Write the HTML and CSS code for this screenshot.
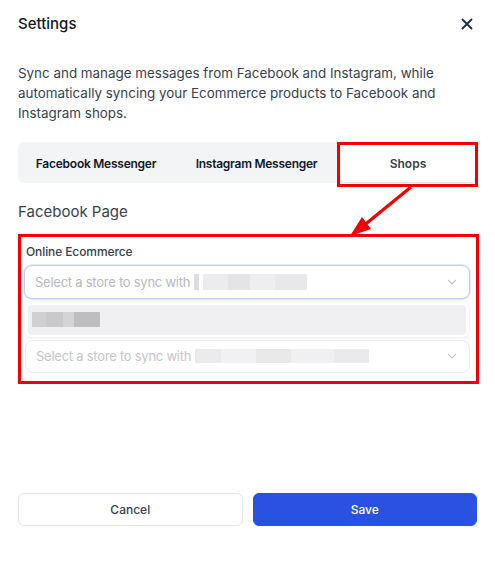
FILE: index.html
```html
<!DOCTYPE html>
<html lang="en">
<head>
<meta charset="utf-8">
<title>Settings</title>
<link rel="stylesheet" href="styles.css">
</head>
<body>
<div class="modal">
  <header class="header">
    <h1 class="title">Settings</h1>
    <button class="close" aria-label="Close">
      <svg width="12" height="12" viewBox="0 0 12 12"><path d="M1.5 1.5L10.5 10.5M10.5 1.5L1.5 10.5" stroke="#1f2937" stroke-width="1.8" stroke-linecap="round"/></svg>
    </button>
  </header>
  <p class="desc">Sync and manage messages from Facebook and Instagram, while automatically syncing your Ecommerce products to Facebook and Instagram shops.</p>

  <div class="tabs">
    <div class="tab">Facebook Messenger</div>
    <div class="tab">Instagram Messenger</div>
    <div class="tab active">Shops</div>
    <div class="mark-tab"></div>
  </div>

  <h2 class="section">Facebook Page</h2>

  <div class="field mark-field">
    <label class="label">Online Ecommerce</label>
    <div class="select focused">
      <span class="ph">Select a store to sync with</span>
      <span class="blur b1"></span>
      <svg class="chev" width="10" height="6" viewBox="0 0 10 6"><path d="M1 1l4 4 4-4" fill="none" stroke="#c2c5cb" stroke-width="1.2"/></svg>
    </div>
    <div class="menu">
      <div class="item"><span class="blur b3"></span></div>
    </div>
    <div class="select dim">
      <span class="ph">Select a store to sync with</span>
      <span class="blur b2"></span>
      <svg class="chev" width="10" height="6" viewBox="0 0 10 6"><path d="M1 1l4 4 4-4" fill="none" stroke="#c8cbd0" stroke-width="1.2"/></svg>
    </div>
  </div>

  <div class="actions">
    <button class="btn cancel">Cancel</button>
    <button class="btn save">Save</button>
  </div>

  <svg class="arrow" width="495" height="574" viewBox="0 0 495 574">
    <line x1="411" y1="187" x2="362" y2="227" stroke="#f20000" stroke-width="3.2"/>
    <polygon points="350,236 362,217 371,229" fill="#f20000"/>
  </svg>
</div>
</body>
</html>
```

FILE: styles.css
```css
* { box-sizing: border-box; }
html, body { margin: 0; padding: 0; background: #fff; }
body { font-family: Inter, "Noto Sans", sans-serif; color: #111827; }

.modal { position: relative; width: 495px; height: 574px; padding: 0 18px; }

.header { display: flex; justify-content: space-between; align-items: center; height: 48px; }
.title { margin: 0; font-size: 15px; font-weight: 500; line-height: 24px; color: #111827; }
.close { border: 0; background: none; padding: 0; width: 14px; height: 14px; margin-right: 3px; display: flex; align-items: center; justify-content: center; }

.desc { margin: 15px 0 0; font-size: 13.4px; line-height: 20px; color: #374151; }

.tabs { position: relative; margin-top: 19px; height: 41px; background: #f3f4f6; border-radius: 6px; padding: 3px 2px 1px; display: grid; grid-template-columns: 152px 169px 134px; }
.tab { display: flex; align-items: center; justify-content: center; font-size: 12px; font-weight: 600; letter-spacing: -0.25px; color: #111827; }
.tab.active { background: #fff; color: #374151; border-radius: 4px; box-shadow: 0 1px 0 #e5e7eb; letter-spacing: 0; }
.mark-tab { position: absolute; left: 319px; top: 0; width: 141px; height: 45px; border: 3px solid #f20000; pointer-events: none; }

.section { margin: 17px 0 0; font-size: 15px; font-weight: 400; line-height: 24px; color: #374151; }

.field { margin-top: 10px; width: 461px; height: 150px; padding: 6px 6px 8px 3px; display: flex; flex-direction: column; }
.mark-field { border: 3px solid #f20000; }
.label { font-size: 12px; line-height: 18px; color: #374151; padding-left: 2px; font-weight: 500; letter-spacing: -0.1px; }

.select { margin-top: 4px; height: 35px; border: 1px solid #e5e7eb; border-radius: 8px; display: flex; align-items: center; padding: 0 12px 0 10px; background: #fff; }
.select.focused { border-color: #c3cdf5; box-shadow: 0 0 0 1px #e3e8fc, 0 2px 4px rgba(0,0,0,0.03); }
.select.dim { margin-top: 3px; height: 34px; margin-left: 1px; border-color: #eceef1; }
.ph { font-size: 13px; letter-spacing: -0.25px; color: #b7babf; white-space: pre; }
.dim .ph { color: #c3c6cb; }
.chev { margin-left: auto; }

.blur { display: inline-block; height: 16px; margin-left: 4px; border-radius: 1px; }
.b1 { width: 113px; background: linear-gradient(90deg, #dcdcde 0 4%, #fff 4% 8%, #ececee 8% 30%, #e4e4e6 30% 50%, #eeeef0 50% 72%, #e8e8ea 72% 100%); }
.b2 { width: 174px; height: 14px; background: linear-gradient(90deg, #ebebed 0 15%, #f1f1f3 15% 35%, #e9e9eb 35% 55%, #f0f0f2 55% 80%, #eaeaec 80% 100%); }
.b3 { width: 68px; height: 15px; margin-left: 4px; background: linear-gradient(90deg, #d0d0d3 0 20%, #c9c9cc 20% 45%, #d4d4d7 45% 62%, #bebec1 62% 100%); }

.menu { margin: 3px 1px 0 1px; height: 35px; width: 444px; background: #fff; border-radius: 6px; padding: 3px; box-shadow: 0 1px 4px rgba(0,0,0,0.08); }
.item { height: 30px; background: #f0f0f2; border-radius: 4px; display: flex; align-items: center; }

.actions { margin-top: 109px; display: flex; gap: 10px; }
.btn { flex: 1; height: 33px; border-radius: 6px; font-family: Inter, "Noto Sans", sans-serif; font-size: 12px; font-weight: 500; cursor: pointer; }
.cancel { background: #fff; border: 1px solid #e3e5e9; color: #374151; }
.save { background: #2952e3; border: 1px solid #2952e3; color: #fff; }

.arrow { position: absolute; left: 0; top: 0; pointer-events: none; }
```
